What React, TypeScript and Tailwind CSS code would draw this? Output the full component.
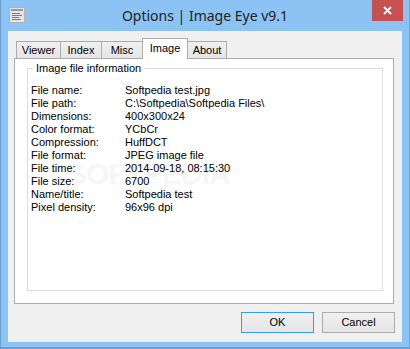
import React from "react";

const rows: Array<[string, string]> = [
  ["File name:", "Softpedia test.jpg"],
  ["File path:", "C:\\Softpedia\\Softpedia Files\\"],
  ["Dimensions:", "400x300x24"],
  ["Color format:", "YCbCr"],
  ["Compression:", "HuffDCT"],
  ["File format:", "JPEG image file"],
  ["File time:", "2014-09-18, 08:15:30"],
  ["File size:", "6700"],
  ["Name/title:", "Softpedia test"],
  ["Pixel density:", "96x96 dpi"],
];

const tabs = [
  { name: "Viewer", w: "w-[45px]" },
  { name: "Index", w: "w-[42px]" },
  { name: "Misc", w: "w-[42px]" },
  { name: "Image", w: "w-[46px]" },
  { name: "About", w: "w-[40px]" },
];

const AppIcon = () => (
  <svg width="16" height="16" viewBox="0 0 16 16">
    <rect x="0.5" y="0.5" width="15" height="15" fill="#e4e4e4" stroke="#b4b4b4" />
    <rect x="2" y="2" width="12" height="2" fill="#9a9a9a" />
    <path d="M3 6.5h8M3 8.5h10M3 10.5h7M3 12.5h9" stroke="#7d7d7d" strokeWidth="1" />
  </svg>
);

export default function App() {
  return (
    <div className="w-[410px] h-[349px] bg-[#8ac3f4] border-x border-b-2 border-[#6c9dcd] font-['Liberation_Sans',Arial,sans-serif] text-[11px] text-black select-none">
      {/* title bar */}
      <div className="grid grid-cols-[1fr_auto_1fr] h-[31px]">
        <div className="pl-[8px] pt-[7px]">
          <AppIcon />
        </div>
        <div className="self-center pb-[1px] font-['Noto_Sans',sans-serif] text-[14px] text-[#222]">
          Options | Image Eye v9.1
        </div>
        <div className="flex justify-end items-start pr-[6px]">
          <div className="w-[31px] h-[21px] bg-[#c75050] flex items-center justify-center">
            <svg width="9" height="9" viewBox="0 0 9 9">
              <path d="M1 1l7 7M8 1l-7 7" stroke="#fff" strokeWidth="1.8" />
            </svg>
          </div>
        </div>
      </div>

      {/* client area */}
      <div className="mx-[7px] h-[311px] bg-[#f0f0f0] pt-[7px]">
        <div className="flex items-end h-[21px] pl-[8px] relative z-10">
          {tabs.map((t, i) =>
            t.name === "Image" ? (
              <div
                key={t.name}
                className={`${t.w} h-[21px] -ml-px bg-white border border-b-0 border-[#acacac] text-center leading-[19px]`}
              >
                {t.name}
              </div>
            ) : (
              <div
                key={t.name}
                className={`${t.w} h-[17px] ${i > 0 ? "-ml-px" : ""} mb-px bg-linear-to-b from-[#f0f0f0] to-[#e5e5e5] border border-b-0 border-[#acacac] text-center leading-[17px]`}
              >
                {t.name}
              </div>
            )
          )}
        </div>

        <div className="ml-[6px] mr-[8px] -mt-px h-[246px] bg-white border border-[#acacac] pt-[9px] pl-[12px] pr-[10px]">
          <div className="relative h-[223px] border border-[#dcdcdc] leading-[13px]">
            <div className="absolute left-[39px] top-[90px] text-[30px] leading-none font-bold tracking-[-1px] text-[#f6f6f6]">
              SOFTPEDIA
            </div>
            <div className="relative w-fit -mt-[7px] ml-[5px] px-[3px] bg-white h-[13px]">
              Image file information
            </div>
            <div className="relative mt-[9px] pl-[3px] grid grid-cols-[94px_1fr]">
              {rows.map(([k, v]) => (
                <React.Fragment key={k}>
                  <div>{k}</div>
                  <div>{v}</div>
                </React.Fragment>
              ))}
            </div>
          </div>
        </div>

        <div className="flex justify-end gap-[8px] pr-[7px] mt-[8px]">
          <button className="w-[73px] h-[21px] border border-[#3399ff] bg-linear-to-b from-[#f0f0f0] to-[#e5e5e5] leading-[19px]">
            OK
          </button>
          <button className="w-[73px] h-[21px] border border-[#acacac] bg-linear-to-b from-[#f0f0f0] to-[#e5e5e5] leading-[19px]">
            Cancel
          </button>
        </div>
      </div>
    </div>
  );
}
